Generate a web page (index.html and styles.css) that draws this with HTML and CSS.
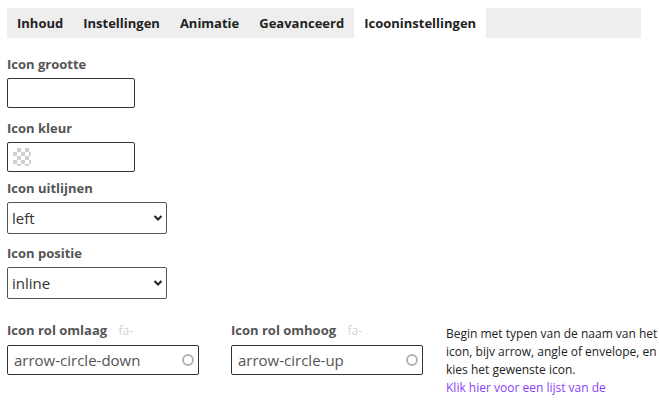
FILE: index.html
```html
<!DOCTYPE html>
<html>
<head>
<meta charset="utf-8">
<link rel="stylesheet" href="styles.css">
</head>
<body>
<div class="tabs">
  <div class="tab">Inhoud</div>
  <div class="tab">Instellingen</div>
  <div class="tab">Animatie</div>
  <div class="tab">Geavanceerd</div>
  <div class="tab active">Icooninstellingen</div>
</div>
<div class="form">
  <div class="field f-size">
    <label class="label">Icon grootte</label>
    <div class="input"></div>
  </div>
  <div class="field f-color">
    <label class="label">Icon kleur</label>
    <div class="input"><span class="checker"></span></div>
  </div>
  <div class="field f-align">
    <label class="label">Icon uitlijnen</label>
    <div class="select"><span>left</span>
      <svg class="chev" width="10" height="8" viewBox="0 0 10 8"><path d="M1.5 2 L5 5.5 L8.5 2" fill="none" stroke="#222" stroke-width="2"/></svg>
    </div>
  </div>
  <div class="field f-pos">
    <label class="label">Icon positie</label>
    <div class="select"><span>inline</span>
      <svg class="chev" width="10" height="8" viewBox="0 0 10 8"><path d="M1.5 2 L5 5.5 L8.5 2" fill="none" stroke="#222" stroke-width="2"/></svg>
    </div>
  </div>
  <div class="row">
    <div class="col">
      <label class="label">Icon rol omlaag <span class="hint">fa-</span></label>
      <div class="input icon-input"><span class="val">arrow-circle-down</span><span class="ring"></span></div>
    </div>
    <div class="col col-2">
      <label class="label">Icon rol omhoog <span class="hint">fa-</span></label>
      <div class="input icon-input"><span class="val">arrow-circle-up</span><span class="ring"></span></div>
    </div>
    <div class="help">
      Begin met typen van de naam van het icon, bijv arrow, angle of envelope, en kies het gewenste icon.<br>
      <a class="link">Klik hier voor een lijst van de</a>
    </div>
  </div>
</div>
</body>
</html>
```
FILE: styles.css
```css
html, body {
  margin: 0;
  background: #fff;
}
body {
  padding: 8px 7px;
  font-family: "Open Sans", "Noto Sans", sans-serif;
  color: #222;
}
.tabs {
  display: flex;
  width: 634px;
  height: 30px;
  background: #eeeeee;
}
.tab {
  padding: 0 10px;
  font-size: 13px;
  font-weight: 700;
  color: #222;
  line-height: 30px;
}
.tab.active {
  background: #fff;
}
.form {
  padding-top: 17px;
}
.field {
  display: flex;
  flex-direction: column;
  align-items: flex-start;
}
.f-size { margin-bottom: 11px; }
.f-color { margin-bottom: 7px; }
.f-align { margin-bottom: 10px; }
.f-pos { margin-bottom: 22px; }
.label {
  display: block;
  font-size: 13px;
  font-weight: 700;
  color: #555;
  line-height: 18px;
  margin-bottom: 5px;
}
.hint {
  font-weight: 400;
  font-size: 12px;
  color: #d4d4d4;
  margin-left: 8px;
}
.input {
  box-sizing: border-box;
  width: 128px;
  height: 30px;
  border: 1px solid #333;
  border-radius: 2px;
  display: flex;
  align-items: center;
  padding: 0 5px;
}
.checker {
  width: 18px;
  height: 18px;
  background-color: #fff;
  background-image:
    linear-gradient(45deg, #d0d0d0 25%, transparent 25%, transparent 75%, #d0d0d0 75%),
    linear-gradient(45deg, #d0d0d0 25%, transparent 25%, transparent 75%, #d0d0d0 75%);
  background-size: 8px 8px;
  background-position: 0 0, 4px 4px;
}
.select {
  box-sizing: border-box;
  width: 160px;
  height: 32px;
  border: 1px solid #555;
  border-radius: 2px;
  display: flex;
  align-items: center;
  justify-content: space-between;
  padding: 0 2px 0 4px;
  font-size: 15px;
  color: #333;
}
.chev {
  margin-right: 1px;
}
.row {
  display: flex;
  align-items: flex-start;
}
.col {
  flex-shrink: 0;
  width: 192px;
  margin-right: 32px;
}
.col-2 {
  margin-right: 23px;
}
.icon-input {
  width: 192px;
  justify-content: space-between;
  padding: 0 4px 0 6px;
}
.val {
  font-size: 15px;
  color: #555;
}
.ring {
  box-sizing: border-box;
  width: 12px;
  height: 12px;
  border: 2px solid #b4b4b4;
  border-radius: 50%;
}
.help {
  flex-shrink: 0;
  width: 216px;
  font-size: 12px;
  line-height: 18px;
  color: #222;
  padding-top: 4px;
}
.link {
  color: #8a3ffc;
  text-decoration: none;
}
```
